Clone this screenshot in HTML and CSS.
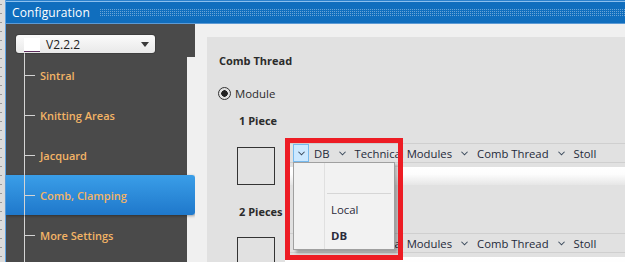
FILE: index.html
```html
<!DOCTYPE html>
<html lang="en">
<head>
    <meta charset="UTF-8">
    <title>Configuration</title>
    <link rel="stylesheet" href="styles.css">
</head>
<body>
    <div class="screen">
        <div class="ruler"></div>
        <div class="window">
            <div class="titlebar">
                <span class="title">Configuration</span>
                <span class="grip"></span>
            </div>
            <div class="body">
                <aside class="sidebar">
                    <div class="sidebar-top">
                        <div class="version-select">
                            <span class="swatch"></span>
                            <span class="version">V2.2.2</span>
                            <span class="caret"></span>
                        </div>
                    </div>
                    <ul class="tree">
                        <li class="tree-item">Sintral</li>
                        <li class="tree-item">Knitting Areas</li>
                        <li class="tree-item">Jacquard</li>
                        <li class="tree-item active">Comb, Clamping</li>
                        <li class="tree-item">More Settings</li>
                    </ul>
                </aside>

                <main class="main">
                    <section class="panel">
                        <h2 class="section-title">Comb Thread</h2>
                        <label class="radio"><span class="radio-mark"></span>Module</label>

                        <h3 class="group-title">1 Piece</h3>
                        <div class="piece-row">
                            <div class="piece-box"></div>
                            <div class="piece-path">
                                <div class="crumbs">
                                    <span class="crumb-btn open">
                                        <svg viewBox="0 0 8 5"><path d="M0.5 0.5 L4 4 L7.5 0.5"/></svg>
                                    </span>
                                    <span class="crumb">DB</span>
                                    <svg class="chev" viewBox="0 0 8 5"><path d="M0.5 0.5 L4 4 L7.5 0.5"/></svg>
                                    <span class="crumb">Technical Modules</span>
                                    <svg class="chev" viewBox="0 0 8 5"><path d="M0.5 0.5 L4 4 L7.5 0.5"/></svg>
                                    <span class="crumb">Comb Thread</span>
                                    <svg class="chev" viewBox="0 0 8 5"><path d="M0.5 0.5 L4 4 L7.5 0.5"/></svg>
                                    <span class="crumb">Stoll</span>
                                </div>
                                <div class="path-field"></div>

                                <div class="menu">
                                    <div class="menu-gutter"></div>
                                    <div class="menu-items">
                                        <div class="menu-empty"></div>
                                        <div class="menu-sep"></div>
                                        <div class="menu-item">Local</div>
                                        <div class="menu-item current">DB</div>
                                    </div>
                                </div>
                            </div>
                        </div>

                        <h3 class="group-title second">2 Pieces</h3>
                        <div class="piece-row">
                            <div class="piece-box"></div>
                            <div class="piece-path">
                                <div class="crumbs">
                                    <span class="crumb-btn">
                                        <svg viewBox="0 0 8 5"><path d="M0.5 0.5 L4 4 L7.5 0.5"/></svg>
                                    </span>
                                    <span class="crumb">DB</span>
                                    <svg class="chev" viewBox="0 0 8 5"><path d="M0.5 0.5 L4 4 L7.5 0.5"/></svg>
                                    <span class="crumb">Technical Modules</span>
                                    <svg class="chev" viewBox="0 0 8 5"><path d="M0.5 0.5 L4 4 L7.5 0.5"/></svg>
                                    <span class="crumb">Comb Thread</span>
                                    <svg class="chev" viewBox="0 0 8 5"><path d="M0.5 0.5 L4 4 L7.5 0.5"/></svg>
                                    <span class="crumb">Stoll</span>
                                </div>
                                <div class="path-field"></div>
                            </div>
                        </div>
                    </section>
                </main>
            </div>
        </div>
        <div class="highlight"></div>
    </div>
</body>
</html>
```

FILE: styles.css
```css
/* Base */
* {
    box-sizing: border-box;
    margin: 0;
    padding: 0;
}

body {
    width: 625px;
    height: 262px;
    overflow: hidden;
    font-family: "Open Sans", "Noto Sans", sans-serif;
    font-size: 11px;
    color: #2b2b2b;
    background-color: #f0f0f0;
}

.screen {
    position: relative;
    display: flex;
    height: 262px;
}

/* Desktop strip on the left */
.ruler {
    width: 5px;
    flex: none;
    background:
        repeating-linear-gradient(#9a9a9a 0 1px, transparent 1px 9px) 0 4px / 2px 100% no-repeat,
        #dcdcdc;
}

/* Window */
.window {
    flex: 1;
    display: flex;
    flex-direction: column;
    min-width: 0;
    border-left: 1px solid #5fa3e3;
}

.titlebar {
    height: 24px;
    flex: none;
    display: flex;
    align-items: center;
    gap: 9px;
    padding-left: 6px;
    background-color: #106ebe;
    box-shadow: inset 0 1px 0 #2a80cc, inset 0 2px 0 #8cc0ee, inset 0 -1px 0 #5c9ad4;
}

.title {
    color: #fff;
    font-size: 12px;
    letter-spacing: 0.1px;
}

.grip {
    flex: 1;
    height: 7px;
    margin-top: 1px;
    background: conic-gradient(rgba(255, 255, 255, 0.38) 0 25%, transparent 0) 0 0 / 2px 2px;
}

.body {
    flex: 1;
    display: flex;
    min-height: 0;
}

/* Sidebar */
.sidebar {
    width: 189px;
    flex: none;
    display: flex;
    flex-direction: column;
    background-color: #f0f0f0;
}

.sidebar-top {
    height: 33px;
    padding: 11px 0 0 10px;
    background:
        linear-gradient(#d4d4d4, #d4d4d4) 18px 29px / 1px 4px no-repeat,
        #4a4a4a;
}

.version-select {
    width: 139px;
    height: 18px;
    display: flex;
    align-items: center;
    padding: 0 5px 0 8px;
    border-radius: 3px;
    background: linear-gradient(#fbfbfb, #e9e9e9);
    box-shadow: 0 0 0 1px rgba(0, 0, 0, 0.15);
}

.swatch {
    width: 16px;
    height: 14px;
    margin-top: 2px;
    background-color: #fff;
    border-bottom: 1px solid #5b2d5b;
}

.version {
    margin-left: 6px;
    color: #222;
    font-size: 12px;
}

.caret {
    margin-left: auto;
    margin-right: 1px;
    border-left: 4px solid transparent;
    border-right: 4px solid transparent;
    border-top: 5px solid #3a3a3a;
}

.tree {
    flex: 1;
    list-style: none;
    margin-right: 8px;
    background:
        linear-gradient(#d4d4d4, #d4d4d4) 18px 0 / 1px 100% no-repeat,
        #4a4a4a;
}

.tree-item {
    height: 40px;
    display: flex;
    align-items: center;
    padding-left: 34px;
    color: #f3b466;
    font-size: 11px;
    font-weight: 600;
    background: linear-gradient(#d4d4d4, #d4d4d4) 19px 50% / 10px 1px no-repeat;
}

.tree-item:first-child {
    margin-top: -2px;
}

.tree-item.active {
    margin-right: -8px;
    border-radius: 0 3px 3px 0;
    background:
        linear-gradient(#d4d4d4, #d4d4d4) 19px 50% / 10px 1px no-repeat,
        linear-gradient(#d4d4d4, #d4d4d4) 18px 0 / 1px 100% no-repeat,
        linear-gradient(#3a9ee8, #1f78cb);
    box-shadow: 1px 1px 3px rgba(0, 0, 0, 0.35);
}

/* Main area */
.main {
    flex: 1;
    min-width: 0;
    padding: 13px 0 0 12px;
    background-color: #f0f0f0;
}

.panel {
    height: 100%;
    padding: 16px 0 0 12px;
    background-color: #e1e1e1;
}

.section-title,
.group-title {
    font-size: 11px;
    font-weight: 700;
    line-height: 16px;
    color: #2b2b2b;
}

.radio {
    display: flex;
    align-items: center;
    gap: 4px;
    height: 16px;
    margin: 16px 0 0 -1px;
    font-size: 11.4px;
}

.radio-mark {
    width: 13px;
    height: 13px;
    border: 1px solid #333;
    border-radius: 50%;
    background: radial-gradient(circle, #222 3px, transparent 3.5px);
}

.group-title {
    margin: 12px 0 0 20px;
}

.group-title.second {
    margin-top: 19px;
}

.piece-row {
    display: flex;
    gap: 10px;
    margin: 14px 0 0 18px;
}

.group-title.second + .piece-row {
    margin-top: 13px;
}

.piece-box {
    width: 38px;
    height: 38px;
    flex: none;
    margin-top: 4px;
    border: 1px solid #333;
}

.piece-path {
    position: relative;
    flex: 1;
    min-width: 0;
}

.crumbs {
    height: 20px;
    display: flex;
    align-items: center;
    gap: 9px;
    padding-left: 8px;
    border-top: 1px solid #cfcfcf;
    border-bottom: 1px solid #cfcfcf;
    white-space: nowrap;
    font-size: 11.3px;
    color: #1f2a3a;
}

.crumb-btn {
    width: 16px;
    height: 18px;
    display: flex;
    align-items: center;
    justify-content: center;
    margin-right: -4px;
}

.crumb-btn.open {
    background-color: #cce8ff;
    border: 1px solid #76b9ed;
}

.crumb-btn svg,
.chev {
    width: 7px;
    height: 5px;
    flex: none;
}

.crumb-btn svg path,
.chev path {
    fill: none;
    stroke: #3b4a5c;
    stroke-width: 1.2;
}

.path-field {
    height: 18px;
    margin-top: 4px;
    background: linear-gradient(#ffffff, #fdfdfd 40%, #e6e6e6);
}

/* Open dropdown */
.menu {
    position: absolute;
    left: 8px;
    top: 19px;
    width: 102px;
    height: 88px;
    display: flex;
    background-color: #f2f2f2;
    border: 1px solid #a0a0a0;
    box-shadow: 3px 3px 3px rgba(0, 0, 0, 0.3);
    z-index: 2;
}

.menu-gutter {
    width: 31px;
    border-right: 1px solid #e0e0e0;
}

.menu-items {
    flex: 1;
    padding: 0 3px 0 2px;
}

.menu-empty {
    height: 30px;
}

.menu-sep {
    height: 1px;
    background-color: #d6d6d6;
}

.menu-item {
    height: 26px;
    display: flex;
    align-items: center;
    padding-left: 4px;
    font-size: 11.4px;
    color: #2b2b3b;
}

.menu-item:nth-child(3) {
    margin-top: 2px;
}

.menu-item.current {
    font-weight: 700;
}

/* Annotation frame */
.highlight {
    position: absolute;
    left: 285px;
    top: 138px;
    width: 118px;
    height: 122px;
    border: 5px solid #ed1c24;
    z-index: 3;
}
```
